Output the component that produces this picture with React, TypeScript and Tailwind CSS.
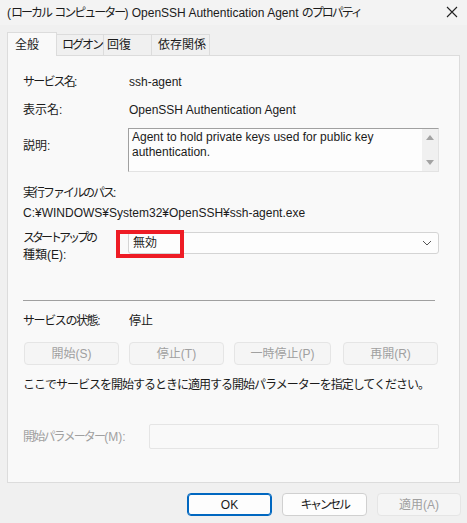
import React from "react";

const FONT = '"Liberation Sans", "Noto Sans CJK JP", sans-serif';

function Label({ children, className }: { children: React.ReactNode; className?: string }) {
  return <span className={["w-[106px] shrink-0", className ?? ""].join(" ")}>{children}</span>;
}

function SmallButton({ label, className }: { label: string; className?: string }) {
  return (
    <div
      className={[
        "flex h-[23px] items-center justify-center rounded-[4px] border border-[#e5e5e5] bg-[#f5f5f5] text-[#a0a0a0]",
        className ?? "",
      ].join(" ")}
    >
      {label}
    </div>
  );
}

export default function App() {
  return (
    <div
      className="flex h-[523px] w-[467px] flex-col overflow-hidden whitespace-nowrap bg-[#f0f0f0] text-[12px] text-[#1b1b1b]"
      style={{ fontFamily: FONT }}
    >
      {/* title bar */}
      <div className="flex h-[25px] shrink-0 items-center justify-between bg-[#f3f3f3] pl-[7px] pr-[9px]">
        <span className="leading-none">
          (<span className="tracking-[-2px]">ローカル</span> <span className="tracking-[-2px]">コンピューター</span>) OpenSSH
          Authentication Agent <span className="tracking-[-2px]">のプロパティ</span>
        </span>
        <svg width="12" height="12" viewBox="0 0 12 12" className="mt-[-2px]">
          <path d="M1 1 L11 11 M11 1 L1 11" stroke="#222" strokeWidth="1.1" fill="none" />
        </svg>
      </div>

      {/* tabs */}
      <div className="mt-[8px] flex h-[22px] shrink-0 items-end pl-[7px]">
        <div className="relative z-10 mb-[-1px] flex h-[24px] w-[50px] items-center justify-start border border-b-0 border-[#dcdcdc] bg-[#f9f9f9] pl-[7px]">
          全般
        </div>
        <div className="flex h-[21px] w-[47px] items-center border border-b-0 border-l-0 border-[#dcdcdc] bg-[#f0f0f0] pl-[5px] tracking-[-2px]">
          ログオン
        </div>
        <div className="flex h-[21px] w-[48px] items-center border border-b-0 border-l-0 border-[#dcdcdc] bg-[#f0f0f0] pl-[3px]">
          回復
        </div>
        <div className="flex h-[21px] w-[58px] items-center border border-b-0 border-l-0 border-[#dcdcdc] bg-[#f0f0f0] pl-[6px]">
          依存関係
        </div>
      </div>

      {/* panel */}
      <div className="mx-[7px] flex h-[428px] shrink-0 flex-col border border-[#dcdcdc] bg-[#f9f9f9] pl-[15px] pr-[20px]">
        <div className="mt-[16px] flex h-[20px] items-center">
          <Label>
            <span className="tracking-[-1.8px]">サービス名</span>:
          </Label>
          <span>ssh-agent</span>
        </div>
        <div className="mt-[8px] flex h-[20px] items-center">
          <Label>表示名:</Label>
          <span>OpenSSH Authentication Agent</span>
        </div>
        <div className="mt-[8px] flex h-[44px]">
          <span className="mt-[9px] w-[105px] shrink-0">説明:</span>
          <div className="flex flex-1 border border-[#e3e3e3] border-l-[#a0a0a0] border-t-[#a0a0a0] bg-[#fdfdfd]">
            <div className="flex-1 whitespace-normal px-[3px] pt-[1px] leading-[15px]">
              Agent to hold private keys used for public key authentication.
            </div>
            <div className="flex w-[16px] flex-col items-center justify-between bg-[#f0f0f0] py-[6px]">
              <svg width="8" height="5" viewBox="0 0 8 5">
                <path d="M0 5 L4 0 L8 5 Z" fill="#a3a3a3" />
              </svg>
              <svg width="8" height="5" viewBox="0 0 8 5">
                <path d="M0 0 L4 5 L8 0 Z" fill="#a3a3a3" />
              </svg>
            </div>
          </div>
        </div>
        <div className="mt-[11px] flex h-[20px] items-center">
          <span className="tracking-[-2px]">実行ファイルのパス</span>:
        </div>
        <div className="flex h-[20px] items-center">C:¥WINDOWS¥System32¥OpenSSH¥ssh-agent.exe</div>
        <div className="mt-[9px] flex h-[40px]">
          <div className="mt-[-2px] w-[105px] shrink-0 leading-[17px]">
            <div className="tracking-[-3px]">スタートアップの</div>
            <div>種類(E):</div>
          </div>
          <div className="relative flex h-[22px] flex-1 items-center rounded-[3px] border border-[#d4d4d4] bg-[#fdfdfd] pl-[4px] pr-[6px]">
            <span className="flex-1">無効</span>
            <svg width="10" height="6" viewBox="0 0 10 6">
              <path d="M1 1 L5 5 L9 1" stroke="#555" strokeWidth="1" fill="none" />
            </svg>
            <div className="absolute left-[-13px] top-[-3px] h-[28px] w-[68px] border-[4px] border-[#ee1c25]" />
          </div>
        </div>

        <div className="mt-[28px] h-px w-[412px] bg-[#a0a0a0]" />

        <div className="mt-[10px] flex h-[20px] items-center">
          <Label>
            <span className="tracking-[-1.4px]">サービスの状態</span>:
          </Label>
          <span>停止</span>
        </div>
        <div className="mt-[11px] flex">
          <SmallButton label="開始(S)" className="ml-[1px] w-[95px]" />
          <SmallButton label="停止(T)" className="ml-[10px] w-[95px]" />
          <SmallButton label="一時停止(P)" className="ml-[10px] w-[97px]" />
          <SmallButton label="再開(R)" className="ml-[12px] w-[95px]" />
        </div>
        <div className="mt-[10px] flex h-[20px] items-center">
          <span className="tracking-[-1px]">
            ここでサービスを開始するときに適用する開始パラメーターを指定してください。
          </span>
        </div>
        <div className="mt-[29px] flex h-[25px] items-center">
          <span className="w-[126px] shrink-0 text-[#a0a0a0]">
            <span className="tracking-[-1.8px]">開始パラメーター</span>(M):
          </span>
          <div className="h-[25px] flex-1 rounded-[2px] border border-[#e5e5e5] bg-[#f9f9f9]" />
        </div>
      </div>

      {/* dialog buttons */}
      <div className="mt-[10px] flex justify-end gap-[10px] pr-[6px]">
        <div className="flex h-[23px] w-[85px] items-center justify-center rounded-[4px] border border-[#0067c0] bg-[#fdfdfd] shadow-[inset_0_0_0_1px_#0067c0]">
          OK
        </div>
        <div className="flex h-[23px] w-[85px] items-center justify-center rounded-[4px] border border-[#d0d0d0] bg-[#fdfdfd]">
          <span className="tracking-[-2.4px]">キャンセル</span>
        </div>
        <div className="flex h-[23px] w-[84px] items-center justify-center rounded-[4px] border border-[#e5e5e5] bg-[#f5f5f5] text-[#a0a0a0]">
          適用(A)
        </div>
      </div>
    </div>
  );
}
